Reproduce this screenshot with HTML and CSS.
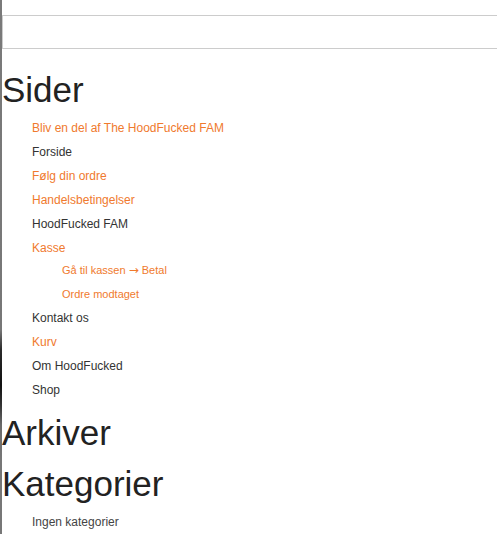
FILE: index.html
```html
<!DOCTYPE html>
<html lang="da">
<head>
<meta charset="utf-8">
<title>Sider</title>
<link rel="stylesheet" href="styles.css">
</head>
<body>
<div class="page">
  <div class="search"><input class="search-input" type="text" aria-label="Søg"></div>
  <h2 class="widget-title">Sider</h2>
  <ul class="menu">
    <li><a class="link orange" href="#">Bliv en del af The HoodFucked FAM</a></li>
    <li><a class="link" href="#">Forside</a></li>
    <li><a class="link orange" href="#">Følg din ordre</a></li>
    <li><a class="link orange" href="#">Handelsbetingelser</a></li>
    <li><a class="link" href="#">HoodFucked FAM</a></li>
    <li><a class="link orange" href="#">Kasse</a>
      <ul class="submenu">
        <li><a class="link orange" href="#">Gå til kassen <span class="arrow">→</span> Betal</a></li>
        <li><a class="link orange" href="#">Ordre modtaget</a></li>
      </ul>
    </li>
    <li><a class="link" href="#">Kontakt os</a></li>
    <li><a class="link orange" href="#">Kurv</a></li>
    <li><a class="link" href="#">Om HoodFucked</a></li>
    <li><a class="link" href="#">Shop</a></li>
  </ul>
  <h2 class="widget-title">Arkiver</h2>
  <h2 class="widget-title">Kategorier</h2>
  <ul class="menu">
    <li class="empty">Ingen kategorier</li>
  </ul>
</div>
</body>
</html>
```
FILE: styles.css
```css
html, body {
  margin: 0;
  padding: 0;
  background: #fff;
}
body {
  font-family: "Liberation Sans", Arial, Helvetica, sans-serif;
  color: #333;
  overflow: hidden;
  background:
    linear-gradient(to bottom, #7a7a7a 0, #777 330px, #2a2a2a 350px, #111 385px, #333 405px, #6a6a6a 425px, #777 460px) left top / 2px 100% no-repeat,
    #fff;
}
.page {
  padding-left: 2px;
  overflow: hidden;
}
.search {
  padding-top: 15px;
  margin-bottom: 21px;
  overflow: hidden;
}
.search-input {
  display: block;
  box-sizing: border-box;
  width: 620px;
  height: 34px;
  margin: 0;
  padding: 0 6px;
  border: 1px solid #cccccc;
  background: #fff;
  outline: none;
}
.widget-title {
  margin: 11px 0 6px;
  font-size: 35px;
  line-height: 40px;
  font-weight: normal;
  color: #222;
}
.menu {
  list-style: none;
  margin: 0;
  padding: 0 0 0 30px;
  font-size: 12px;
  line-height: 24px;
}
.submenu {
  list-style: none;
  margin: -2px 0 0;
  padding: 0 0 0 30px;
  font-size: 11px;
  line-height: 24px;
}
.link {
  color: #333;
  text-decoration: none;
}
.link.orange {
  color: #f07a2e;
}
.arrow {
  font-family: "DejaVu Sans", sans-serif;
  font-size: 12px;
  line-height: 0;
}
.empty {
  color: #444;
}
```
